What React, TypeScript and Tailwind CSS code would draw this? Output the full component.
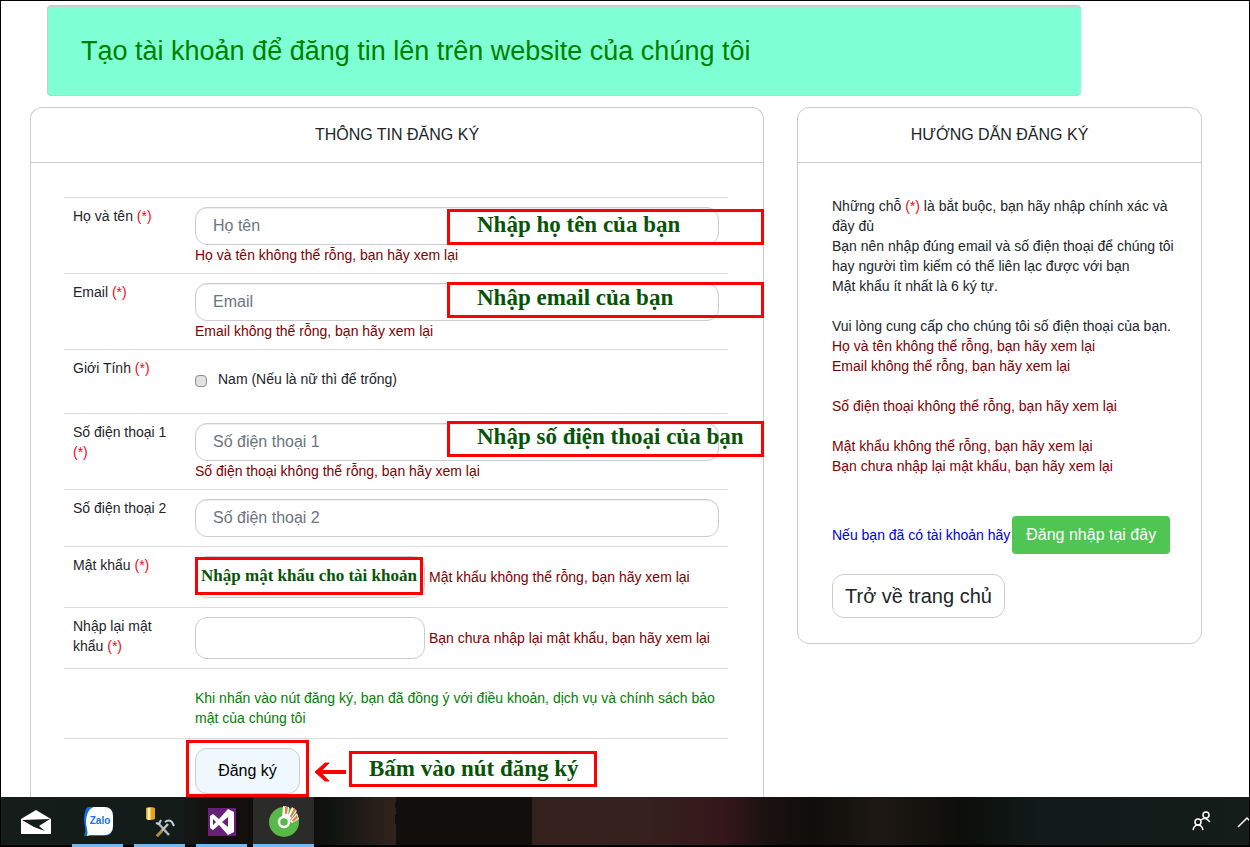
import type { ReactNode } from "react";

const Req = () => <span className="text-[#f5061c]">(*)</span>;

function Note({ className, children }: { className: string; children: ReactNode }) {
  return (
    <div
      className={`absolute z-10 flex items-center border-3 border-[#ff0000] font-['Liberation_Serif',serif] font-bold whitespace-nowrap text-[#075407] ${className}`}
    >
      {children}
    </div>
  );
}

function Row({ label, htmlFor, height, children }: { label?: ReactNode; htmlFor?: string; height: string; children: ReactNode }) {
  return (
    <div className={`relative flex border-t border-[#dcdcdc] ${height}`}>
      <div className="w-[131px] shrink-0 py-2 pr-7 pl-[9px]">
        {label && (
          <label htmlFor={htmlFor} className="block">
            {label}
          </label>
        )}
      </div>
      <div className="min-w-0 flex-1 pt-[9px] pr-[9px]">{children}</div>
    </div>
  );
}

const field =
  "block h-[38px] w-full rounded-xl border border-[#cccccc] bg-white px-[17px] text-base text-[#495057] placeholder:text-[#6c757d] shadow-[inset_0_1px_1px_rgba(0,0,0,0.08)]";

function Panel({ title, className, children }: { title: string; className: string; children: ReactNode }) {
  return (
    <section className={`border border-[#cccccc] ${className}`}>
      <h2 className="border-b border-[#cccccc] py-[15px] text-center text-base leading-6">{title}</h2>
      {children}
    </section>
  );
}

function Taskbar() {
  return (
    <footer className="relative flex h-[50px] shrink-0 items-stretch bg-[linear-gradient(90deg,#141d1a_0%,#141c19_14%,#120f0d_17%,#100e0c_25%,#101411_26.5%,#33221d_31.6%,#120e0c_31.7%,#120e0c_42.5%,#35221e_42.6%,#35201d_52%,#35161a_58%,#1a1110_61.5%,#0f0e0b_65%,#1d1813_70.5%,#0d0e0b_77%,#111a18_83%,#141d1a_100%)] shadow-[inset_0_-2px_0_#000]">
      <svg className="absolute top-0 left-[390px]" width="142" height="30" viewBox="0 0 142 30" fill="#120e0c">
        <path d="M4 5h4v6H4zM4 18h4v9H4z" />
        <path d="M125 1h12v6h-12zM131 9h8v10h-8zM131 19h3v7h-3z" />
      </svg>
      <button aria-label="Mail" className="mr-0.5 flex w-[69px] items-center justify-center">
        <svg width="32" height="24" viewBox="0 0 32 24">
          <path d="M1 9 16 0l15 9v15H1z" fill="#fff" />
          <path d="M2 10 30 9l-11 7 6 5-11-4z" fill="#141d1a" />
        </svg>
      </button>
      <button aria-label="Zalo" className="flex w-[51px] items-center justify-center border-b-3 border-[#76b9ed] pt-[3px]">
        <svg width="32" height="32" viewBox="0 0 32 32">
          <path d="M7 1h14q10 0 10 9v10q0 10-10 10H2q2-4 1-9-2-8 0-15 1-5 4-5z" fill="#0b6fe8" />
          <path d="M12 1h10q9 0 9 9v10q0 9-9 9H8l-3 1q1-3 0-7-2-8 0-14 2-7 7-8z" fill="#fff" />
          <text x="18" y="18" textAnchor="middle" fontSize="10" fontWeight="bold" fontFamily="Liberation Sans" fill="#1a73e8">
            Zalo
          </text>
        </svg>
      </button>
      <button aria-label="SQL Server" className="ml-[11px] flex w-[51px] items-center justify-center border-b-3 border-[#76b9ed] pt-[3px]">
        <svg width="32" height="32" viewBox="0 0 32 32">
          <path d="M2 2q4-2 9 0v11q-5 2-9 0z" fill="#e5a021" />
          <path d="M5 2v12" stroke="#fff1a8" strokeWidth="3" />
          <path d="m14 17 11 12" stroke="#a8b8c4" strokeWidth="2.5" />
          <path d="m13 30 11-12" stroke="#c8c0a8" strokeWidth="2.5" />
          <path d="m13 30 5-5" stroke="#b0884c" strokeWidth="2.5" />
          <path d="m12 17 3 1 2-4M21 16q4-3 7 0l2 4" fill="none" stroke="#c4d2dc" strokeWidth="2" />
        </svg>
      </button>
      <button aria-label="Visual Studio" className="ml-[11px] flex w-[51px] items-center justify-center border-b-3 border-[#76b9ed] pt-[3px]">
        <svg width="30" height="30" viewBox="0 0 30 30">
          <path d="M1 1h28v28H1z" fill="#68217a" />
          <path d="m3 9 3-2 6 5 9-10 6 3v20l-6 3-9-10-6 5-3-2zm3 3v6l3-3zm9 3 6 5V10z" fill="#fff" fillRule="evenodd" />
        </svg>
      </button>
      <button aria-label="Cốc Cốc" className="ml-[6px] flex w-[61px] items-center justify-center border-b-3 border-[#76b9ed] bg-[#2b2b2a] pt-[3px]">
        <svg width="32" height="32" viewBox="0 0 32 32">
          <circle cx="16" cy="16" r="15" fill="#57b947" />
          <path d="m14 12 1-12 6 1-1 10zM19 12l5-11 5 4-7 9zM22 15l7-8 2 6-7 4z" fill="#fff" />
          <circle cx="16" cy="16" r="5" fill="#57b947" stroke="#fff" strokeWidth="2.5" />
          <path d="M17 8V1h3l-1 7zM22 10l4-8 2 2-5 8zM24 14l5-5 1 3-5 4z" fill="#ef7b45" />
        </svg>
      </button>
      <div className="ml-auto flex items-center">
        <button aria-label="People">
          <svg width="22" height="24" viewBox="0 0 22 24" fill="none" stroke="#fff" strokeWidth="1.5">
            <circle cx="7" cy="12" r="3" />
            <path d="M2 20q1-5 5-5t5 5" />
            <circle cx="15" cy="5" r="3" />
            <path d="M10 10q4-4 9 2" />
          </svg>
        </button>
        <button aria-label="Show hidden icons" className="ml-6 overflow-hidden">
          <svg width="12" height="12" viewBox="0 0 12 12" fill="none" stroke="#fff" strokeWidth="1.5">
            <path d="m1 11 9-9 4 4" />
          </svg>
        </button>
      </div>
    </footer>
  );
}

export default function App() {
  return (
    <div className="flex h-screen flex-col overflow-hidden border border-b-0 border-black bg-white font-['Liberation_Sans',Arial,sans-serif] text-sm leading-5 text-[#212529]">
      <main className="min-h-0 flex-1 overflow-hidden pr-[47px] pl-[29px]">
        <header className="mt-1 mr-[121px] ml-[17px] flex h-[91px] items-center rounded-sm border-t-2 border-b border-l border-[#cccccc] bg-[#7fffd4] px-[33px]">
          <h1 className="text-[27px] leading-9 text-[#008000]">Tạo tài khoản để đăng tin lên trên website của chúng tôi</h1>
        </header>

        <div className="mt-[11px] grid grid-cols-[minmax(0,734fr)_minmax(0,405fr)] items-start gap-[33px]">
          <Panel title="THÔNG TIN ĐĂNG KÝ" className="rounded-t-xl border-b-0">
            <form className="px-[35px] pt-[34px] pb-6 pl-[33px]">
              <Row height="h-[76px]" htmlFor="name" label={<>Họ và tên <Req /></>}>
                <input id="name" placeholder="Họ tên" className={field} />
                <p className="text-[#800000]">Họ và tên không thể rỗng, bạn hãy xem lại</p>
                <Note className="top-[11px] right-[-36px] h-9 w-[317px] pb-1 pl-[27px] text-[23px]">Nhập họ tên của bạn</Note>
              </Row>
              <Row height="h-[76px]" htmlFor="email" label={<>Email <Req /></>}>
                <input id="email" placeholder="Email" className={field} />
                <p className="text-[#800000]">Email không thể rỗng, bạn hãy xem lại</p>
                <Note className="top-2 right-[-36px] h-9 w-[317px] pb-1 pl-[27px] text-[23px]">Nhập email của bạn</Note>
              </Row>
              <Row height="h-16" htmlFor="male" label={<>Giới Tính <Req /></>}>
                <div className="flex items-center pt-[10px]">
                  <input
                    id="male"
                    type="checkbox"
                    className="mt-[3px] size-3 appearance-none rounded-sm border border-[#8e8e8e] bg-[#e2e2e2] checked:bg-[#5b8ad6]"
                  />
                  <label htmlFor="male" className="ml-[11px]">Nam (Nếu là nữ thì để trống)</label>
                </div>
              </Row>
              <Row height="h-[76px]" htmlFor="phone1" label={<>Số điện thoại 1 <Req /></>}>
                <input id="phone1" placeholder="Số điện thoại 1" className={field} />
                <p className="text-[#800000]">Số điện thoại không thể rỗng, bạn hãy xem lại</p>
                <Note className="top-[7px] right-[-36px] h-9 w-[317px] pb-1 pl-[27px] text-[23px]">Nhập số điện thoại của bạn</Note>
              </Row>
              <Row height="h-[57px]" htmlFor="phone2" label="Số điện thoại 2">
                <input id="phone2" placeholder="Số điện thoại 2" className={field} />
              </Row>
              <Row height="h-[61px]" htmlFor="password" label={<>Mật khẩu <Req /></>}>
                <div className="flex items-center gap-1">
                  <input id="password" type="password" className="h-[42px] w-[230px] rounded-xl border border-[#cccccc] px-4" />
                  <span className="text-[#800000]">Mật khẩu không thể rỗng, bạn hãy xem lại</span>
                </div>
                <Note className="top-[10px] left-[131px] h-[38px] w-[228px] justify-center bg-white text-[17px]">Nhập mật khẩu cho tài khoản</Note>
              </Row>
              <Row height="h-[61px]" htmlFor="confirm" label={<>Nhập lại mật khẩu <Req /></>}>
                <div className="flex items-center gap-1">
                  <input id="confirm" type="password" className="h-[42px] w-[230px] rounded-xl border border-[#cccccc] px-4" />
                  <span className="text-[#800000]">Bạn chưa nhập lại mật khẩu, bạn hãy xem lại</span>
                </div>
              </Row>
              <Row height="h-[70px]">
                <p className="pt-[10px] text-[#008000]">
                  Khi nhấn vào nút đăng ký, bạn đã đồng ý với điều khoản, dịch vụ và chính sách bảo mật của chúng tôi
                </p>
              </Row>
              <Row height="h-[76px]">
                <button type="button" className="h-[46px] w-[105px] rounded-xl border border-[#cccccc] bg-[#f0f8ff] text-base text-black">
                  Đăng ký
                </button>
                <div className="absolute top-px left-[122px] h-[57px] w-[123px] border-3 border-[#ff0000]" />
                <svg className="absolute top-[22px] left-[249px]" width="33" height="22" viewBox="0 0 33 22" fill="none" stroke="#ff0000">
                  <path d="M3 11h30" strokeWidth="4" />
                  <path d="M12 2h4L7 11l9 9h-4L2 11z" fill="#ff0000" strokeWidth="1" />
                </svg>
                <Note className="top-3 left-[285px] h-9 w-[248px] pl-[17px] text-[23px]">Bấm vào nút đăng ký</Note>
              </Row>
            </form>
          </Panel>

          <Panel title="HƯỚNG DẪN ĐĂNG KÝ" className="rounded-xl">
            <div className="pt-[33px] pr-5 pb-[25px] pl-[34px]">
              <p>Những chỗ <Req /> là bắt buộc, bạn hãy nhập chính xác và đầy đủ</p>
              <p>Bạn nên nhập đúng email và số điện thoại để chúng tôi hay người tìm kiếm có thể liên lạc được với bạn</p>
              <p>Mật khẩu ít nhất là 6 ký tự.</p>
              <p className="mt-5">Vui lòng cung cấp cho chúng tôi số điện thoại của bạn.</p>
              <div className="text-[#800000]">
                <p>Họ và tên không thể rỗng, bạn hãy xem lại</p>
                <p>Email không thể rỗng, bạn hãy xem lại</p>
                <p className="mt-5">Số điện thoại không thể rỗng, bạn hãy xem lại</p>
                <p className="mt-5">Mật khẩu không thể rỗng, bạn hãy xem lại</p>
                <p>Bạn chưa nhập lại mật khẩu, bạn hãy xem lại</p>
              </div>
              <div className="mt-10 flex items-center gap-0.5 whitespace-nowrap">
                <span className="text-[#0000e0]">Nếu bạn đã có tài khoản hãy</span>
                <a href="#login" className="rounded bg-[#4fc553] px-[14px] py-[7px] text-base text-white">Đăng nhập tại đây</a>
              </div>
              <a href="#home" className="mt-5 inline-block rounded-xl border border-[#cccccc] px-3 py-[7px] text-xl leading-7">
                Trở về trang chủ
              </a>
            </div>
          </Panel>
        </div>
      </main>
      <Taskbar />
    </div>
  );
}
